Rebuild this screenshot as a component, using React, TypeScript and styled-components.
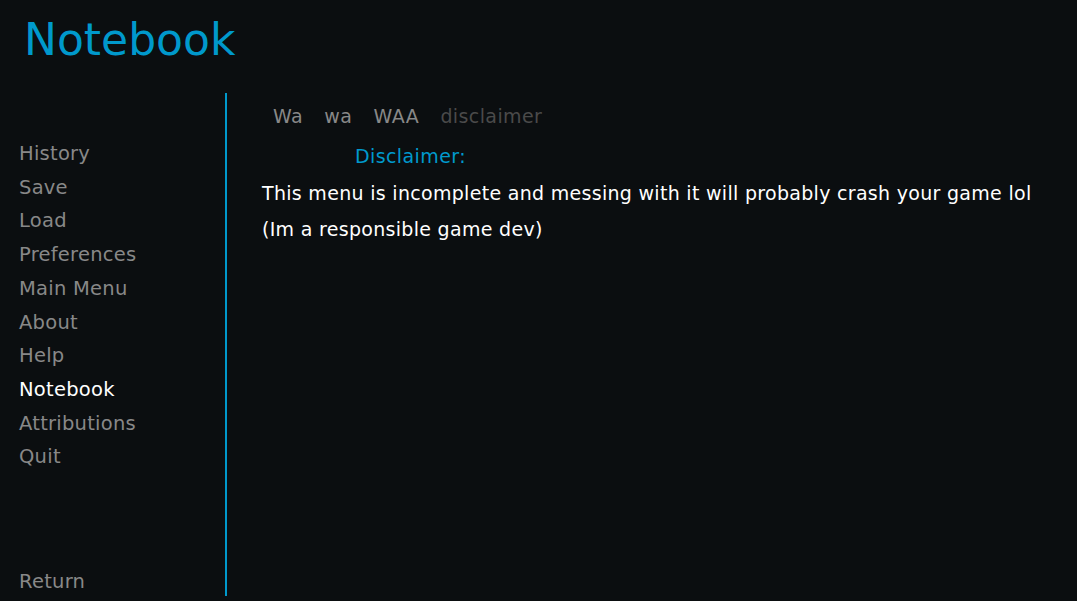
import React from "react";
import styled, { createGlobalStyle } from "styled-components";

const Global = createGlobalStyle`
  html, body { margin: 0; padding: 0; background: #0b0e10; }
  body { font-family: "DejaVu Sans", "Liberation Sans", sans-serif; }
`;

const Page = styled.div`
  width: 1077px;
  height: 601px;
  background: #0b0e10;
  display: flex;
  flex-direction: column;
  overflow: hidden;
`;

const Title = styled.h1`
  margin: 0;
  height: 93px;
  padding: 14px 0 0 24px;
  box-sizing: border-box;
  font-weight: normal;
  font-size: 44px;
  line-height: 52px;
  color: #0099cc;
`;

const Main = styled.div`
  flex: 1;
  display: grid;
  grid-template-columns: 225px 2px 1fr;
  min-height: 0;
`;

const Nav = styled.nav`
  display: flex;
  flex-direction: column;
  padding: 44px 0 2px 19px;
`;

const NavItem = styled.div<{ $selected?: boolean }>`
  font-size: 19.5px;
  letter-spacing: 0.25px;
  line-height: 33.7px;
  color: ${(p) => (p.$selected ? "#ffffff" : "#888888")};
  white-space: nowrap;
`;

const Bottom = styled(NavItem)`
  margin-top: auto;
`;

const Divider = styled.div`
  background: #0099cc;
  margin-bottom: 5px;
`;

const Content = styled.section`
  display: flex;
  flex-direction: column;
  padding: 10px 0 0 35px;
`;

const Tabs = styled.div`
  display: flex;
  gap: 21.3px;
  padding-left: 11px;
`;

const Tab = styled.div<{ $active?: boolean }>`
  font-size: 19px;
  letter-spacing: 0.4px;
  line-height: 26px;
  color: ${(p) => (p.$active ? "#4a4a4a" : "#888888")};
`;

const Heading = styled.div`
  margin: 14px 0 0 93px;
  font-size: 19px;
  letter-spacing: 0.4px;
  line-height: 26px;
  color: #0099cc;
`;

const Body = styled.p`
  margin: 6px 0 0;
  font-size: 19px;
  letter-spacing: 0.3px;
  line-height: 36px;
  color: #ffffff;
`;

const navItems = [
  "History",
  "Save",
  "Load",
  "Preferences",
  "Main Menu",
  "About",
  "Help",
  "Notebook",
  "Attributions",
  "Quit",
];

export default function App() {
  return (
    <Page>
      <Global />
      <Title>Notebook</Title>
      <Main>
        <Nav>
          {navItems.map((n) => (
            <NavItem key={n} $selected={n === "Notebook"}>
              {n}
            </NavItem>
          ))}
          <Bottom>Return</Bottom>
        </Nav>
        <Divider />
        <Content>
          <Tabs>
            <Tab>Wa</Tab>
            <Tab>wa</Tab>
            <Tab>WAA</Tab>
            <Tab $active>disclaimer</Tab>
          </Tabs>
          <Heading>Disclaimer:</Heading>
          <Body>
            This menu is incomplete and messing with it will probably crash your game lol
            <br />
            (Im a responsible game dev)
          </Body>
        </Content>
      </Main>
    </Page>
  );
}
